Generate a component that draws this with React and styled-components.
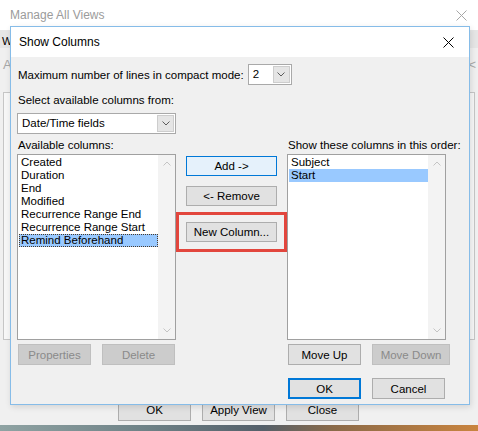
import React from 'react';
import styled, { createGlobalStyle } from 'styled-components';

const GlobalStyle = createGlobalStyle`
  html, body {
    margin: 0;
    padding: 0;
  }
  body {
    width: 478px;
    height: 431px;
    overflow: hidden;
    font-family: "Segoe UI", "Liberation Sans", Arial, sans-serif;
    font-size: 11.5px;
    color: #000;
  }
`;

const available = [
   'Created',
   'Duration',
   'End',
   'Modified',
   'Recurrence Range End',
   'Recurrence Range Start',
   'Remind Beforehand',
];

const shown = ['Subject', 'Start'];

const Chevron = ({ up, color = '#5c5c5c' }) => (
   <svg width="8" height="5" viewBox="0 0 8 5">
      <path
         d={up ? 'M0.5 4.5L4 1L7.5 4.5' : 'M0.5 0.5L4 4L7.5 0.5'}
         fill="none"
         stroke={color}
         strokeWidth="1"
      />
   </svg>
);

const CloseGlyph = ({ color }) => (
   <svg width="11" height="11" viewBox="0 0 11 11">
      <path d="M0.5 0.5L10.5 10.5M10.5 0.5L0.5 10.5" stroke={color} strokeWidth="1" />
   </svg>
);

const ListBox = ({ items, selected, focused }) => (
   <List>
      <Items>
         {items.map(item => (
            <Item key={item} $selected={item === selected} $focused={focused && item === selected}>
               {item}
            </Item>
         ))}
      </Items>
      <ScrollTrack>
         <ScrollArrow><Chevron up color="#c4c4c4" /></ScrollArrow>
         <ScrollArrow><Chevron color="#c4c4c4" /></ScrollArrow>
      </ScrollTrack>
   </List>
);

export default function App() {
   return (
      <>
         <GlobalStyle />
         <Desktop>
            <BackWindow>
               <BackTitle>
                  Manage All Views
                  <CloseGlyph color="#a6a6a6" />
               </BackTitle>
               <BackTabs>W</BackTabs>
               <BackToolbar>
                  <span>A</span>
                  <span>&lt;</span>
               </BackToolbar>
               <BackBody>
                  <BackFrame />
                  <BackCaption>L</BackCaption>
               </BackBody>
               <BackFooter>
                  <Button>OK</Button>
                  <Button>Apply View</Button>
                  <Button>Close</Button>
               </BackFooter>
            </BackWindow>
            <DesktopStrip />

            <Dialog>
               <TitleBar>
                  Show Columns
                  <CloseGlyph color="#000" />
               </TitleBar>
               <Body>
                  <Row>
                     <Label>Maximum number of lines in compact mode:</Label>
                     <Combo $w={44} $gap={4}>
                        <ComboText>2</ComboText>
                        <ComboButton><Chevron /></ComboButton>
                     </Combo>
                  </Row>
                  <Caption $top={8}>Select available columns from:</Caption>
                  <Combo $w={159} $top={4}>
                     <ComboText>Date/Time fields</ComboText>
                     <ComboButton><Chevron /></ComboButton>
                  </Combo>

                  <Columns>
                     <Column $w={159}>
                        <Caption>Available columns:</Caption>
                        <ListBox items={available} selected="Remind Beforehand" focused />
                        <ButtonRow>
                           <Button disabled>Properties</Button>
                           <Button disabled>Delete</Button>
                        </ButtonRow>
                     </Column>

                     <Middle>
                        <Button $w={91} $h={20} $hot>Add -&gt;</Button>
                        <Button $w={91} $h={20}>&lt;- Remove</Button>
                        <Highlight>
                           <Button $w={91} $h={20}>New Column...</Button>
                        </Highlight>
                     </Middle>

                     <Column $w={164}>
                        <Caption>Show these columns in this order:</Caption>
                        <ListWrap>
                           <ListBox items={shown} selected="Start" />
                        </ListWrap>
                        <ButtonRow>
                           <Button>Move Up</Button>
                           <Button $w={78} disabled>Move Down</Button>
                        </ButtonRow>
                        <ButtonRow $top={13}>
                           <Button $default>OK</Button>
                           <Button>Cancel</Button>
                        </ButtonRow>
                     </Column>
                  </Columns>
               </Body>
            </Dialog>
         </Desktop>
      </>
   );
}

const Desktop = styled.div`
      position: relative;
      width: 478px;
      height: 431px;
      overflow: hidden;
      display: flex;
      flex-direction: column;
      background: #f0f0f0;
`;

const BackWindow = styled.div`
      height: 425px;
      display: flex;
      flex-direction: column;
      background: #f0f0f0;
`;

const BackTitle = styled.div`
      height: 30px;
      flex-shrink: 0;
      display: flex;
      align-items: center;
      justify-content: space-between;
      padding: 0 11px 0 10px;
      background: #fff;
      color: #9b9b9b;
      font-size: 12px;
`;

const BackTabs = styled.div`
      height: 18px;
      padding-left: 2px;
      background: #e6e6e6;
      font-size: 11px;
      line-height: 22px;
`;

const BackToolbar = styled.div`
      height: 32px;
      display: flex;
      align-items: center;
      justify-content: space-between;
      padding: 0 2px 0 3px;
      color: #a8a8a8;
      font-size: 13px;
`;

const BackBody = styled.div`
      flex: 1;
      display: flex;
      flex-direction: column;
      padding: 12px 3px 0;
`;

const BackFrame = styled.div`
      height: 246px;
      border: 1px solid #c6c6c6;
      background: #f7f7f7;
`;

const BackCaption = styled.div`
      margin-top: 38px;
      padding-left: 7px;
      font-size: 12px;
`;

const BackFooter = styled.div`
      display: flex;
      gap: 11px;
      padding: 0 0 4px 118px;
      & > button {
         height: 22px;
      }
`;

const DesktopStrip = styled.div`
      flex: 1;
      background: linear-gradient(90deg, #8fa3a3 0%, #6f8287 30%, #55606a 55%, #8b6a48 70%, #c9843f 100%);
`;

const Dialog = styled.div`
      position: absolute;
      left: 10px;
      top: 26px;
      width: 460px;
      height: 379px;
      box-sizing: border-box;
      display: flex;
      flex-direction: column;
      border: 1px solid #86bce8;
      background: #f0f0f0;
      box-shadow: 1px 2px 6px rgba(0, 0, 0, 0.12);
`;

const TitleBar = styled.div`
      height: 30px;
      flex-shrink: 0;
      display: flex;
      align-items: center;
      justify-content: space-between;
      padding: 0 15px 0 8px;
      background: #fff;
      font-size: 12px;
`;

const Body = styled.div`
      flex: 1;
      display: flex;
      flex-direction: column;
      padding: 7px 6px 7px 6px;
`;

const Row = styled.div`
      display: flex;
      align-items: center;
      height: 21px;
`;

const Label = styled.span`
      padding-left: 1px;
      white-space: nowrap;
`;

const Caption = styled.div`
      margin-top: ${({ $top }) => $top || 0}px;
      padding-left: 1px;
      height: 16px;
      line-height: 15px;
      white-space: nowrap;
`;

const Combo = styled.div`
      box-sizing: border-box;
      display: flex;
      width: ${({ $w }) => $w}px;
      height: 21px;
      margin-top: ${({ $top }) => $top || 0}px;
      margin-left: ${({ $gap }) => $gap || 0}px;
      padding: 1px;
      border: 1px solid #a9a9a9;
      background: #fff;
`;

const ComboText = styled.span`
      flex: 1;
      padding-left: 3px;
      line-height: 17px;
      white-space: nowrap;
`;

const ComboButton = styled.span`
      width: 17px;
      box-sizing: border-box;
      display: flex;
      align-items: center;
      justify-content: center;
      background: #e5e5e5;
      border: 1px solid #cdcdcd;
`;

const Columns = styled.div`
      display: flex;
      margin-top: 4px;
`;

const Column = styled.div`
      width: ${({ $w }) => $w}px;
      display: flex;
      flex-direction: column;
`;

const ListWrap = styled.div`
      width: 159px;
`;

const Middle = styled.div`
      width: 91px;
      margin: 0 10px;
      padding-top: 18px;
      display: flex;
      flex-direction: column;
      gap: 10px;
`;

const Highlight = styled.div`
      margin: -4px -10px 0;
      padding: 7px;
      border: 3px solid #e2463d;
`;

const List = styled.div`
      display: flex;
      height: 186px;
      box-sizing: border-box;
      border: 1px solid #a0a0a0;
      background: #fff;
`;

const Items = styled.ul`
      flex: 1;
      margin: 0;
      padding: 1px 0 0 1px;
      list-style: none;
`;

const Item = styled.li`
      height: 13px;
      line-height: 13px;
      padding-left: 2px;
      box-sizing: border-box;
      white-space: nowrap;
      background: ${({ $selected }) => ($selected ? '#99c9ff' : 'transparent')};
      outline: ${({ $focused }) => ($focused ? '1px dotted #4a3a2a' : 'none')};
      outline-offset: -1px;
`;

const ScrollTrack = styled.div`
      width: 17px;
      display: flex;
      flex-direction: column;
      justify-content: space-between;
      background: #f3f3f3;
`;

const ScrollArrow = styled.div`
      height: 17px;
      display: flex;
      align-items: center;
      justify-content: center;
`;

const ButtonRow = styled.div`
      display: flex;
      gap: 11px;
      margin-top: ${({ $top }) => $top || 4}px;
      padding-left: 1px;
`;

const Button = styled.button`
      box-sizing: border-box;
      flex-shrink: 0;
      width: ${({ $w }) => $w || 73}px;
      height: ${({ $h }) => $h || 21}px;
      padding: 0;
      font: inherit;
      white-space: nowrap;
      color: ${({ disabled }) => (disabled ? '#8a8a8a' : '#000')};
      background: ${({ $hot, disabled }) => ($hot ? '#e5f1fb' : disabled ? '#cccccc' : '#e1e1e1')};
      border: ${({ $default, $hot, disabled }) =>
         $default ? '2px solid #0078d7' : `1px solid ${$hot ? '#0078d7' : disabled ? '#bfbfbf' : '#adadad'}`};
`;
